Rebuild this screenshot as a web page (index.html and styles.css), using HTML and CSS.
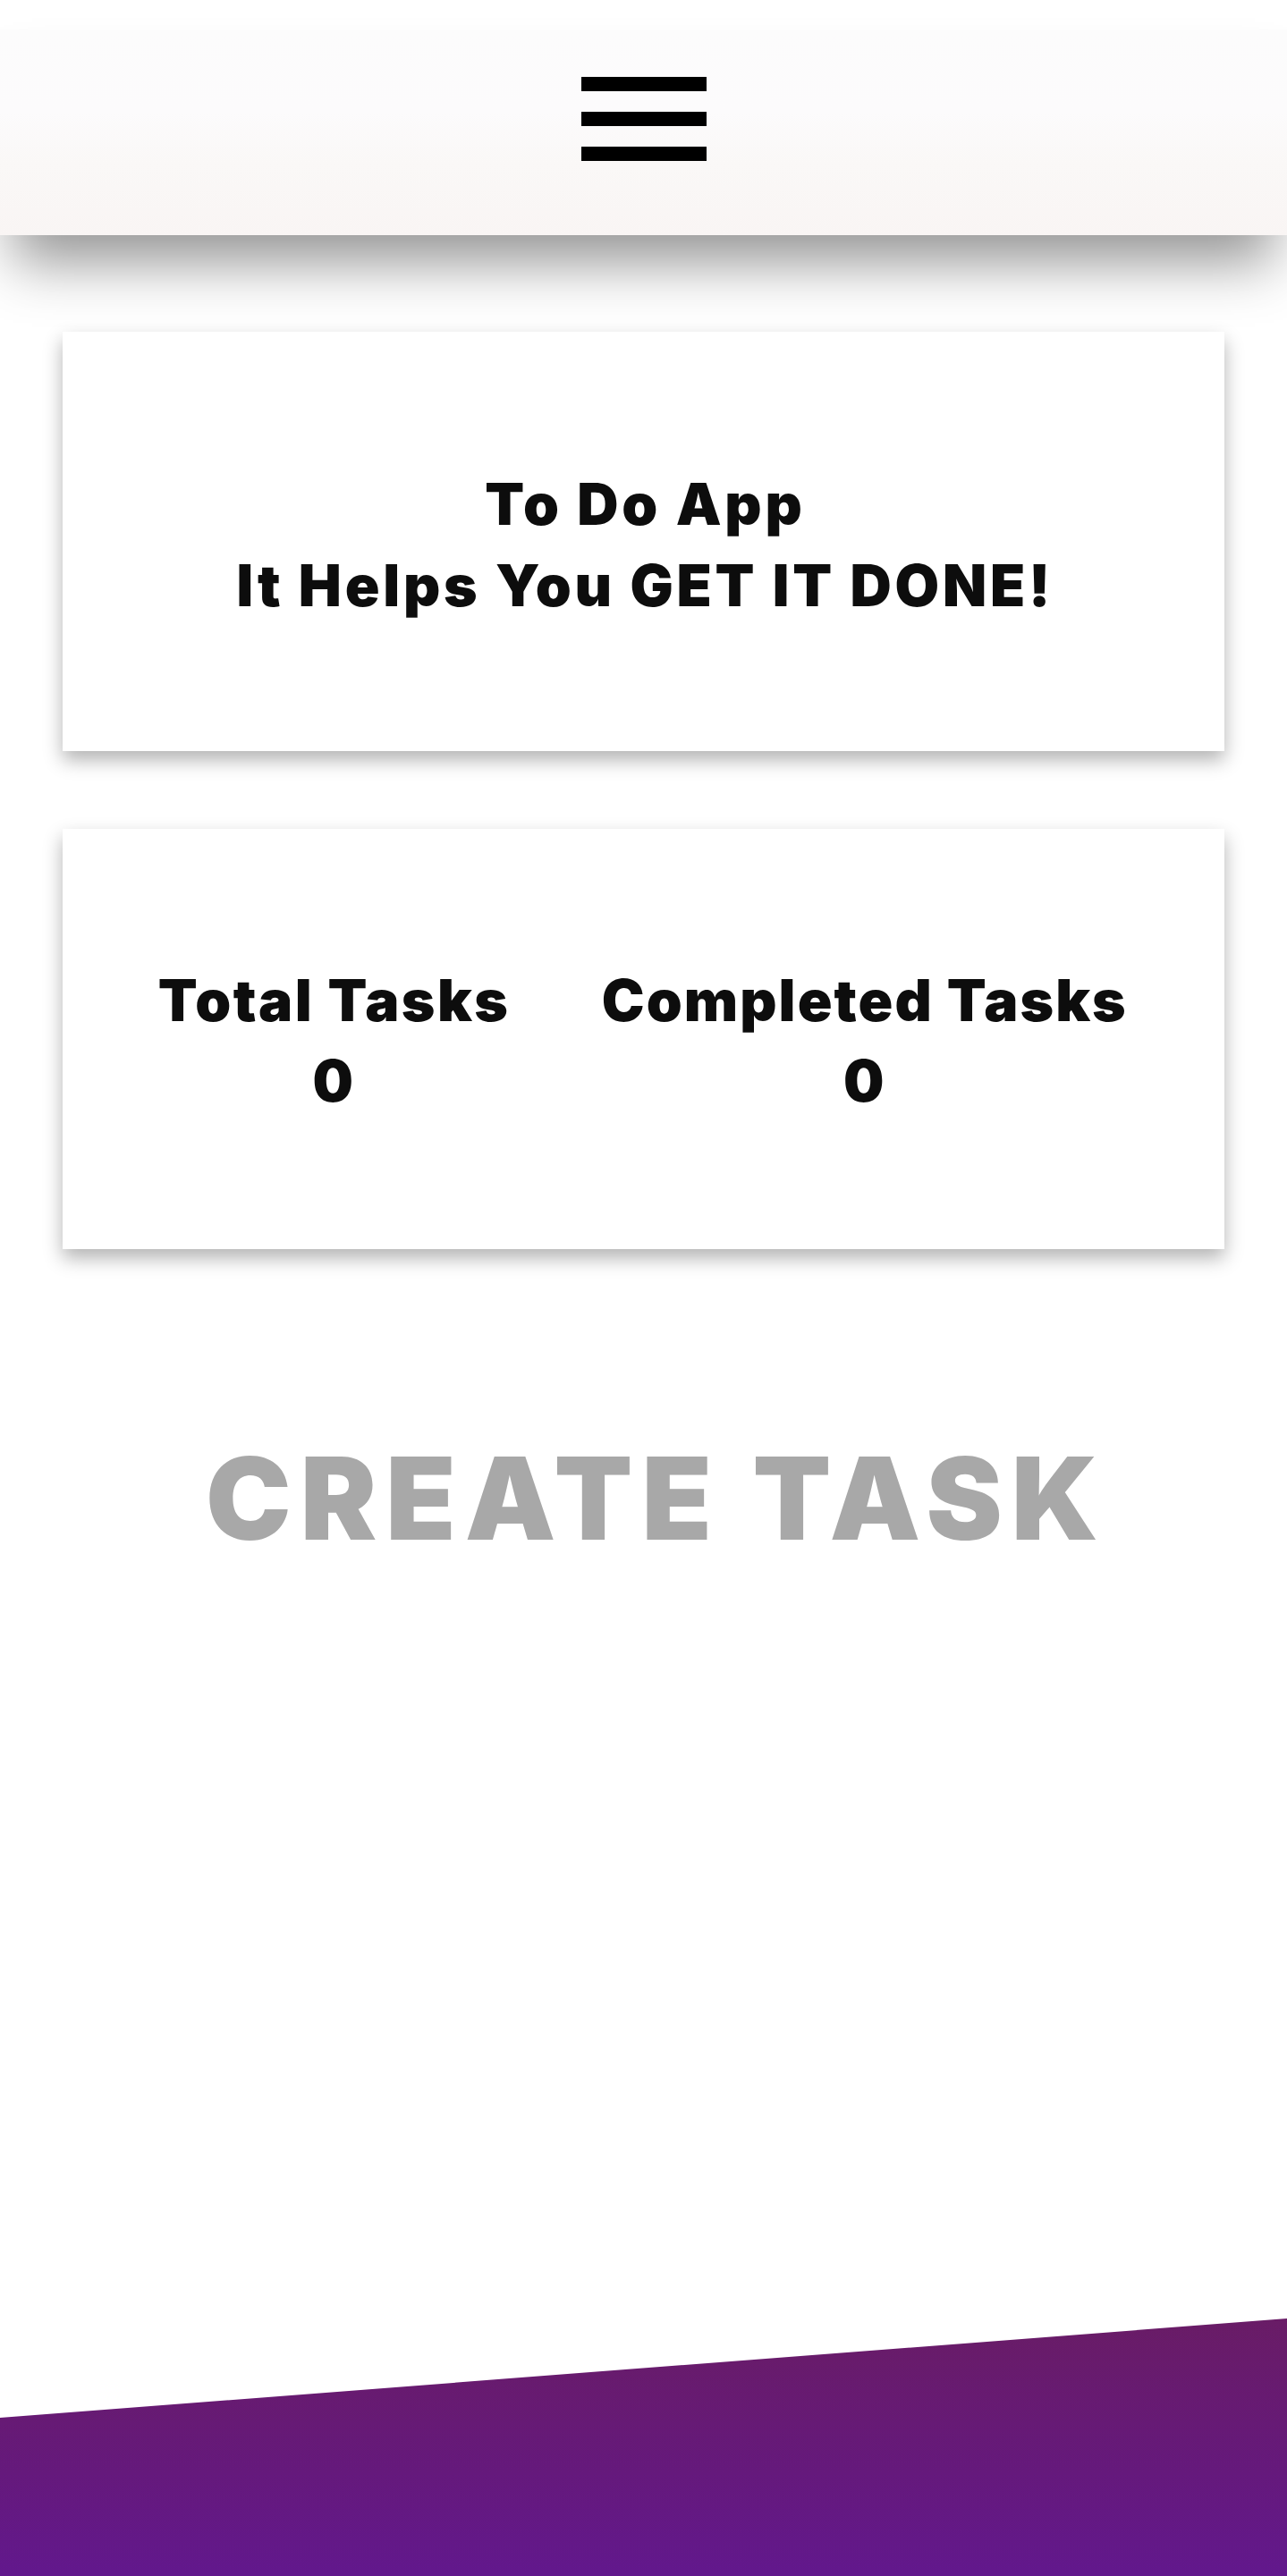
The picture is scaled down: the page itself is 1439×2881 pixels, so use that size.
FILE: index.html
```html
<!DOCTYPE html>
<html lang="en">
<head>
<meta charset="utf-8">
<title>To Do App</title>
<link rel="stylesheet" href="styles.css">
</head>
<body>
  <header class="topbar">
    <button class="menu" aria-label="Menu">
      <span class="bar"></span>
      <span class="bar"></span>
      <span class="bar"></span>
    </button>
  </header>
  <main class="content">
    <section class="card card-intro">
      <h1 class="intro-title">To Do App<br>It Helps You GET IT DONE!</h1>
    </section>
    <section class="card card-stats">
      <div class="stat">
        <div class="stat-label">Total Tasks</div>
        <div class="stat-value">0</div>
      </div>
      <div class="stat stat-completed">
        <div class="stat-label">Completed Tasks</div>
        <div class="stat-value">0</div>
      </div>
    </section>
    <h2 class="create-task">CREATE TASK</h2>
  </main>
  <footer class="footer"></footer>
</body>
</html>
```
FILE: styles.css
```css
html, body {
  margin: 0;
  padding: 0;
}
body {
  min-height: 100vh;
  display: flex;
  flex-direction: column;
  background: #ffffff;
  font-family: "Arial Black", "Inter", "Liberation Sans", sans-serif;
  font-weight: 900;
  color: #0d0d0d;
}
.topbar {
  margin-top: 33px;
  height: 230px;
  box-sizing: border-box;
  padding-top: 53px;
  display: flex;
  justify-content: center;
  align-items: flex-start;
  background: linear-gradient(to bottom, #fcfcfc 0%, #fcfbfc 40%, #faf8f7 65%, #f9f5f4 100%);
  box-shadow: 0 45px 60px -15px rgba(0, 0, 0, 0.42);
  position: relative;
  z-index: 1;
}
.menu {
  display: flex;
  flex-direction: column;
  gap: 23px;
  padding: 0;
  margin: 0;
  border: 0;
  background: transparent;
  cursor: pointer;
}
.bar {
  display: block;
  width: 140px;
  height: 16px;
  background: #000;
}
.content {
  padding: 108px 70px 0;
  display: flex;
  flex-direction: column;
}
.card {
  background: #fff;
  box-shadow: 0 10px 20px rgba(0, 0, 0, 0.3);
  display: flex;
  align-items: center;
  box-sizing: border-box;
}
.card-intro {
  height: 469px;
  justify-content: center;
  padding-top: 6px;
}
.intro-title {
  margin: 0;
  font-size: 64px;
  line-height: 91px;
  font-weight: 900;
  text-align: center;
  letter-spacing: 3.8px;
  padding-left: 3.8px;
}
.card-stats {
  margin-top: 87px;
  height: 470px;
  justify-content: space-evenly;
  padding-top: 4px;
  padding-left: 4px;
}
.stat {
  text-align: center;
  font-size: 64px;
  line-height: 90px;
  letter-spacing: 2.5px;
  padding-left: 2.5px;
}
.stat-completed {
  letter-spacing: 2.1px;
  padding-left: 2.1px;
  margin-right: 8px;
}
.create-task {
  margin: 202px 0 0;
  text-align: center;
  font-size: 128px;
  line-height: 154px;
  font-weight: 900;
  color: #a8a8a8;
  letter-spacing: 10px;
  padding-left: 29px;
}
.footer {
  margin-top: auto;
  height: 288px;
  background: linear-gradient(to bottom, #691c66 0%, #65197c 60%, #62188d 100%);
  clip-path: polygon(0 111px, 100% 0, 100% 100%, 0 100%);
}
```
